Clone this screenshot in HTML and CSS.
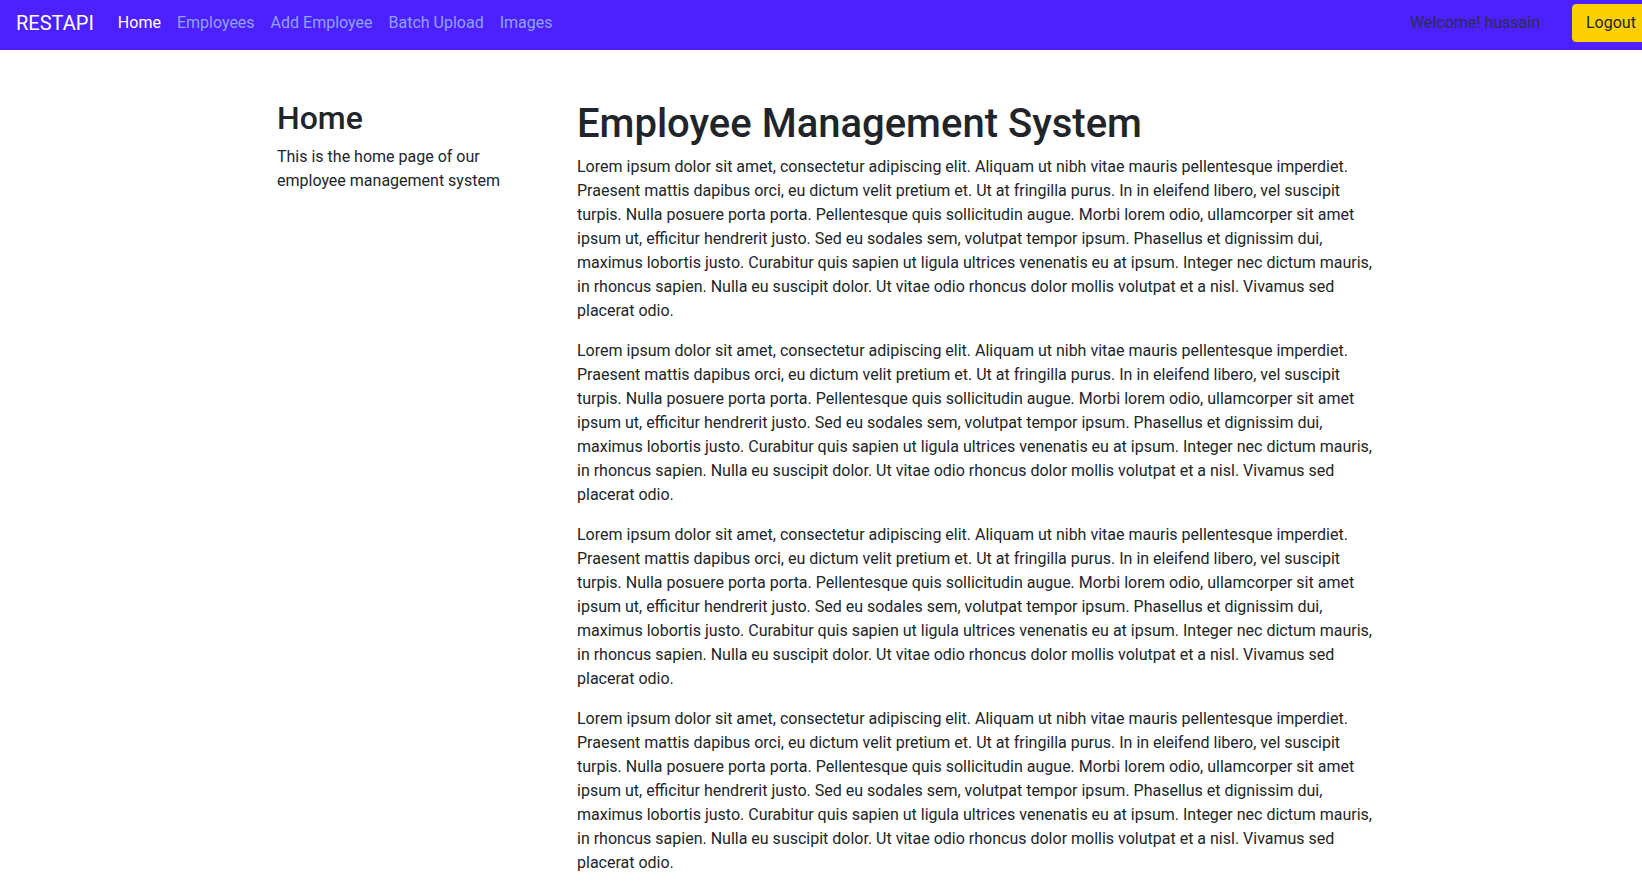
FILE: index.html
```html
<!DOCTYPE html>
<html lang="en">
<head>
<meta charset="utf-8">
<title>RESTAPI</title>
<link rel="stylesheet" href="styles.css">
</head>
<body>
<nav class="navbar">
  <a class="brand" href="#">RESTAPI</a>
  <ul class="nav">
    <li><a class="nav-link active" href="#">Home</a></li>
    <li><a class="nav-link" href="#">Employees</a></li>
    <li><a class="nav-link" href="#">Add Employee</a></li>
    <li><a class="nav-link" href="#">Batch Upload</a></li>
    <li><a class="nav-link" href="#">Images</a></li>
  </ul>
  <div class="nav-right">
    <span class="welcome">Welcome! hussain</span>
    <button class="logout">Logout</button>
  </div>
</nav>
<div class="page">
  <aside class="sidebar">
    <h2>Home</h2>
    <p>This is the home page of our employee management system</p>
  </aside>
  <main class="main">
    <h1>Employee Management System</h1>
    <p>Lorem ipsum dolor sit amet, consectetur adipiscing elit. Aliquam ut nibh vitae mauris pellentesque imperdiet. Praesent mattis dapibus orci, eu dictum velit pretium et. Ut at fringilla purus. In in eleifend libero, vel suscipit turpis. Nulla posuere porta porta. Pellentesque quis sollicitudin augue. Morbi lorem odio, ullamcorper sit amet ipsum ut, efficitur hendrerit justo. Sed eu sodales sem, volutpat tempor ipsum. Phasellus et dignissim dui, maximus lobortis justo. Curabitur quis sapien ut ligula ultrices venenatis eu at ipsum. Integer nec dictum mauris, in rhoncus sapien. Nulla eu suscipit dolor. Ut vitae odio rhoncus dolor mollis volutpat et a nisl. Vivamus sed placerat odio.</p>
    <p>Lorem ipsum dolor sit amet, consectetur adipiscing elit. Aliquam ut nibh vitae mauris pellentesque imperdiet. Praesent mattis dapibus orci, eu dictum velit pretium et. Ut at fringilla purus. In in eleifend libero, vel suscipit turpis. Nulla posuere porta porta. Pellentesque quis sollicitudin augue. Morbi lorem odio, ullamcorper sit amet ipsum ut, efficitur hendrerit justo. Sed eu sodales sem, volutpat tempor ipsum. Phasellus et dignissim dui, maximus lobortis justo. Curabitur quis sapien ut ligula ultrices venenatis eu at ipsum. Integer nec dictum mauris, in rhoncus sapien. Nulla eu suscipit dolor. Ut vitae odio rhoncus dolor mollis volutpat et a nisl. Vivamus sed placerat odio.</p>
    <p>Lorem ipsum dolor sit amet, consectetur adipiscing elit. Aliquam ut nibh vitae mauris pellentesque imperdiet. Praesent mattis dapibus orci, eu dictum velit pretium et. Ut at fringilla purus. In in eleifend libero, vel suscipit turpis. Nulla posuere porta porta. Pellentesque quis sollicitudin augue. Morbi lorem odio, ullamcorper sit amet ipsum ut, efficitur hendrerit justo. Sed eu sodales sem, volutpat tempor ipsum. Phasellus et dignissim dui, maximus lobortis justo. Curabitur quis sapien ut ligula ultrices venenatis eu at ipsum. Integer nec dictum mauris, in rhoncus sapien. Nulla eu suscipit dolor. Ut vitae odio rhoncus dolor mollis volutpat et a nisl. Vivamus sed placerat odio.</p>
    <p>Lorem ipsum dolor sit amet, consectetur adipiscing elit. Aliquam ut nibh vitae mauris pellentesque imperdiet. Praesent mattis dapibus orci, eu dictum velit pretium et. Ut at fringilla purus. In in eleifend libero, vel suscipit turpis. Nulla posuere porta porta. Pellentesque quis sollicitudin augue. Morbi lorem odio, ullamcorper sit amet ipsum ut, efficitur hendrerit justo. Sed eu sodales sem, volutpat tempor ipsum. Phasellus et dignissim dui, maximus lobortis justo. Curabitur quis sapien ut ligula ultrices venenatis eu at ipsum. Integer nec dictum mauris, in rhoncus sapien. Nulla eu suscipit dolor. Ut vitae odio rhoncus dolor mollis volutpat et a nisl. Vivamus sed placerat odio.</p>
  </main>
</div>
</body>
</html>
```

FILE: styles.css
```css
* { box-sizing: border-box; }
html, body { margin: 0; padding: 0; }
body {
  font-family: Roboto, "Liberation Sans", sans-serif;
  font-size: 16px;
  line-height: 1.5;
  color: #212529;
  background: #fff;
  overflow-x: hidden;
}
.navbar {
  display: flex;
  align-items: center;
  height: 50px;
  background: #4d20ff;
  padding: 0 0 5px 16px;
}
.brand {
  font-size: 20px;
  line-height: 30px;
  color: #fff;
  text-decoration: none;
  margin-right: 16px;
}
.nav {
  display: flex;
  list-style: none;
  margin: 0;
  padding: 0;
}
.nav-link {
  display: block;
  padding: 8px;
  color: #8ea2ff;
  text-decoration: none;
}
.nav-link.active { color: #fff; }
.nav-right {
  margin-left: auto;
  display: flex;
  align-items: center;
  margin-right: -8px;
}
.welcome {
  color: #2a2f4a;
  margin-right: 32px;
}
.logout {
  font-family: inherit;
  font-size: 16px;
  line-height: 24px;
  color: #212529;
  background: #ffd000;
  border: 1px solid #ffd000;
  border-radius: 4px;
  padding: 6px 13px;
  height: 38px;
  width: 78px;
  text-align: left;
}
.page {
  display: flex;
  padding: 49px 0 0 277px;
}
.sidebar {
  flex: 0 0 300px;
  padding-right: 48px;
}
.main {
  flex: 0 0 804px;
}
h1, h2 {
  margin: 0 0 8px;
  font-weight: 500;
  line-height: 1.2;
}
h1 { font-size: 40px; margin-top: 1px; margin-bottom: 7px; }
h2 { font-size: 32px; }
p { margin: 0 0 16px; }
```
